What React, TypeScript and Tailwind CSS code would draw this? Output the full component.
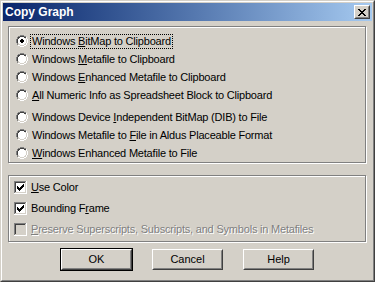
import type { ReactNode } from 'react'

const font = { fontFamily: '"Liberation Sans", Arial, sans-serif' }

function Radio({ checked }: { checked?: boolean }) {
  return (
    <svg width="12" height="12" viewBox="0 0 12 12" className="shrink-0">
      {/* outer ring */}
      <path d="M4 0h4v1H4zM2 1h2v1H2zM8 1h2v1H8zM1 2h1v2H1zM0 4h1v4H0z" fill="#808080" />
      <path d="M10 2h1v2h-1zM11 4h1v4h-1zM10 8h1v2h-1zM8 10h2v1H8zM2 10h2v1H2zM4 11h4v1H4z" fill="#ffffff" />
      <path d="M1 8h1v2H1z" fill="#808080" />
      {/* inner ring */}
      <path d="M4 1h4v1H4zM2 2h2v1H2zM8 2h2v1H8zM2 3h1v1H2zM1 4h1v4H1z" fill="#404040" />
      <path d="M9 3h1v1H9zM10 4h1v4h-1zM9 8h1v2H9zM8 9h1v1H8zM2 8h1v1H2zM3 9h1v1H3zM4 10h4v1H4z" fill="#d4d0c8" />
      {/* fill */}
      <path d="M4 2h4v1h1v1h1v4h-1v1H8v1H4V9H3V8H2V4h1V3h1z" fill="#ffffff" />
      {checked && <path d="M5 4h2v1h1v2H7v1H5V7H4V5h1z" fill="#000000" />}
    </svg>
  )
}

function Check({ checked, disabled }: { checked?: boolean; disabled?: boolean }) {
  return (
    <svg width="13" height="13" viewBox="0 0 13 13" className="shrink-0">
      <rect x="0" y="0" width="13" height="13" fill="#ffffff" />
      <rect x="0" y="0" width="12" height="12" fill="#808080" />
      <rect x="1" y="1" width="11" height="11" fill="#d4d0c8" />
      <rect x="1" y="1" width="10" height="10" fill="#404040" />
      <rect x="2" y="2" width="9" height="9" fill={disabled ? '#d4d0c8' : '#ffffff'} />
      {checked && (
        <path d="M3 5h1v1h1v1h1V6h1V5h1V4h1V3h1v3H9v1H8v1H7v1H6v1H5V9H4V8H3z" fill="#000000" />
      )}
    </svg>
  )
}

function Label({ children, focus }: { children: ReactNode; focus?: boolean }) {
  return (
    <span
      className={
        'text-[11px] leading-[13px] tracking-[-0.2px] whitespace-nowrap px-[1px] ' +
        (focus ? 'outline-1 outline-dotted outline-black' : '')
      }
    >
      {children}
    </span>
  )
}

function RadioRow({ children, checked }: { children: ReactNode; checked?: boolean }) {
  return (
    <div className="flex h-[18px] items-center gap-[3px] pl-[7px]">
      <Radio checked={checked} />
      <Label focus={checked}>{children}</Label>
    </div>
  )
}

function CheckRow({ children, checked, disabled }: { children: ReactNode; checked?: boolean; disabled?: boolean }) {
  return (
    <div className="flex h-[21px] items-center gap-[4px] pl-[5px]">
      <Check checked={checked} disabled={disabled} />
      <span
        className={
          'text-[11px] leading-[13px] tracking-[-0.2px] whitespace-nowrap ' +
          (disabled ? 'text-[#808080] [text-shadow:1px_1px_0_#ffffff]' : 'text-black')
        }
      >
        {children}
      </span>
    </div>
  )
}

function Button({ children, isDefault }: { children: ReactNode; isDefault?: boolean }) {
  return (
    <div className={isDefault ? 'border border-black' : 'border border-transparent'}>
      <div className="border border-t-white border-l-white border-r-[#404040] border-b-[#404040]">
        <div className="flex h-[19px] w-[69px] items-center justify-center border border-t-[#d4d0c8] border-l-[#d4d0c8] border-r-[#808080] border-b-[#808080] text-[11px] text-black">
          {children}
        </div>
      </div>
    </div>
  )
}

const groupBox =
  'w-[358px] ml-[5px] border border-[#808080] shadow-[1px_1px_0_#ffffff,inset_1px_1px_0_#ffffff]'

export default function App() {
  return (
    <div style={font} className="w-[375px] h-[282px] bg-[#d4d0c8] text-black select-none">
      <div className="h-full border border-t-[#d4d0c8] border-l-[#d4d0c8] border-r-[#404040] border-b-[#404040]">
        <div className="h-full border border-t-white border-l-white border-r-[#808080] border-b-[#808080] p-[1px]">
          {/* Title bar */}
          <div className="flex h-[18px] items-center justify-between bg-gradient-to-r from-[#0a246a] to-[#a6caf0] pl-[2px] pr-[2px]">
            <span className="text-[12px] font-bold text-white">Copy Graph</span>
            <div className="border border-t-white border-l-white border-r-[#404040] border-b-[#404040]">
              <div className="flex h-[12px] w-[14px] items-center justify-center border border-t-[#d4d0c8] border-l-[#d4d0c8] border-r-[#808080] border-b-[#808080] bg-[#d4d0c8]">
                <svg width="8" height="7" viewBox="0 0 8 7">
                  <path d="M0 0h2v1h1v1h2V1h1V0h2v1H7v1H6v1H5v1h1v1h1v1h1v1H6V6H5V5H3v1H2v1H0V6h1V5h1V4h1V3H2V2H1V1H0z" fill="#000000" />
                </svg>
              </div>
            </div>
          </div>

          {/* Export format */}
          <div className={groupBox + ' mt-[5px] h-[137px] pt-[5px]'}>
            <RadioRow checked>
              Windows <u>B</u>itMap to Clipboard
            </RadioRow>
            <RadioRow>
              Windows <u>M</u>etafile to Clipboard
            </RadioRow>
            <RadioRow>
              Windows <u>E</u>nhanced Metafile to Clipboard
            </RadioRow>
            <RadioRow>
              <u>A</u>ll Numeric Info as Spreadsheet Block to Clipboard
            </RadioRow>
            <div className="h-[4px]" />
            <RadioRow>
              Windows Device <u>I</u>ndependent BitMap (DIB) to File
            </RadioRow>
            <RadioRow>
              Windows Metafile to <u>F</u>ile in Aldus Placeable Format
            </RadioRow>
            <RadioRow>
              <u>W</u>indows Enhanced Metafile to File
            </RadioRow>
          </div>

          {/* Options */}
          <div className={groupBox + ' mt-[12px] h-[67px] pt-[1px]'}>
            <CheckRow checked>
              <u>U</u>se Color
            </CheckRow>
            <CheckRow checked>
              Bounding F<u>r</u>ame
            </CheckRow>
            <CheckRow disabled>
              <u>P</u>reserve Superscripts, Subscripts, and Symbols in Metafiles
            </CheckRow>
          </div>

          <div className="mt-[6px] flex justify-center gap-[18px]">
            <Button isDefault>OK</Button>
            <Button>Cancel</Button>
            <Button>Help</Button>
          </div>
        </div>
      </div>
    </div>
  )
}
